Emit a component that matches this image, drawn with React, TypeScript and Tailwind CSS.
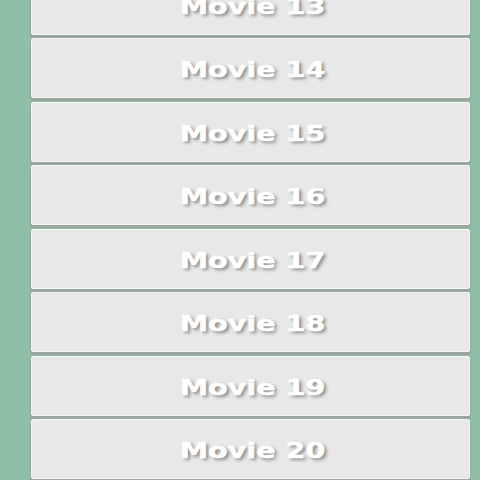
const movies = [13, 14, 15, 16, 17, 18, 19, 20];

export default function App() {
  return (
    <div className="w-[480px] h-[480px] overflow-hidden bg-[#8fbfa7]">
      <div className="flex flex-col gap-[3.5px] pl-[31px] pr-[10px] -mt-[25.5px]">
        {movies.map((n) => (
          <div
            key={n}
            className="h-[60px] flex items-center justify-center pt-[3px] bg-[#e8e8e8] border border-[#f4f7f4] rounded-[2px] shadow-[0_2px_1px_1px_#9aa69f]"
          >
            <span
              className="text-[22px] font-bold text-white scale-x-[1.3] [text-shadow:2px_2px_3px_#8a8a8a] pl-[3px] [-webkit-text-stroke:0.4px_white]"
              style={{ fontFamily: '"DejaVu Sans", sans-serif' }}
            >
              Movie {n}
            </span>
          </div>
        ))}
      </div>
    </div>
  );
}
